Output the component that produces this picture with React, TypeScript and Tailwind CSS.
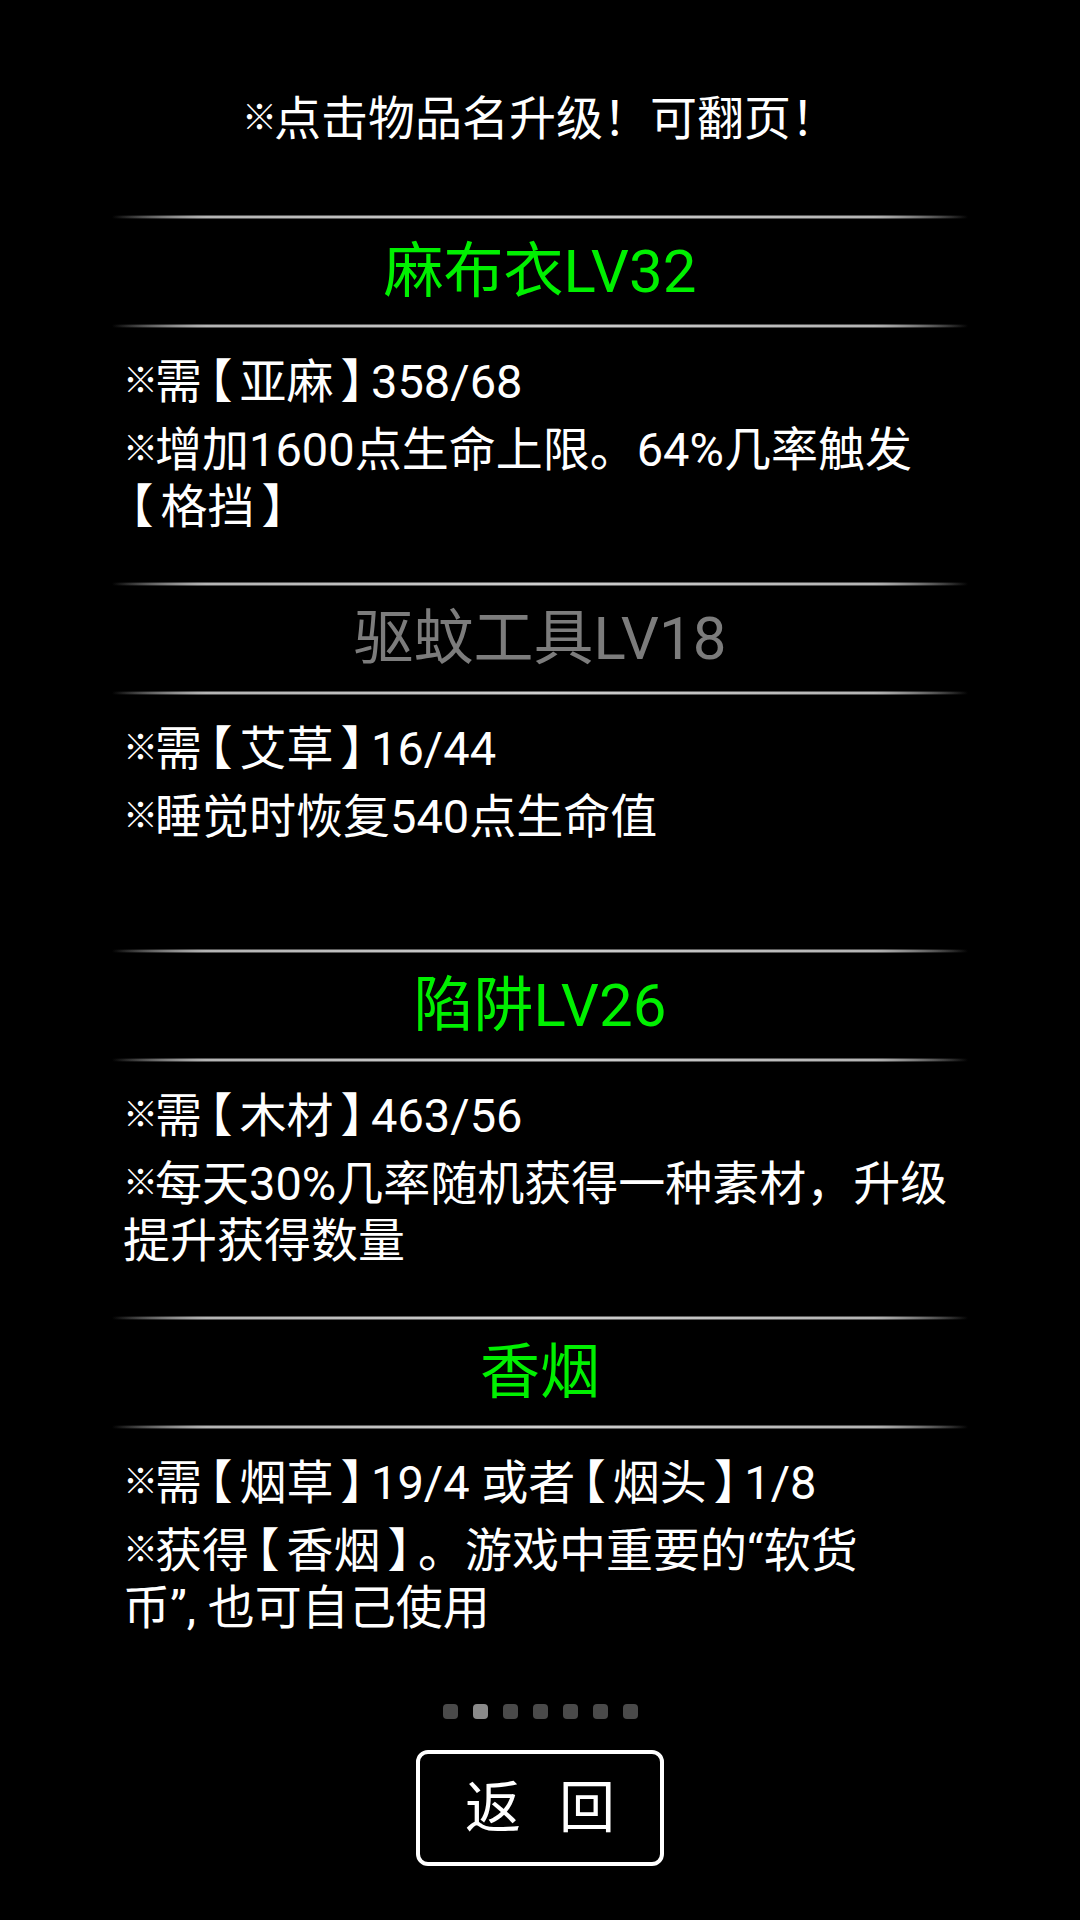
import React from "react";

type Item = {
  title: string;
  active: boolean;
  lines: string[][];
};

const items: Item[] = [
  {
    title: "麻布衣LV32",
    active: true,
    lines: [["※需【亚麻】358/68"], ["※增加1600点生命上限。64%几率触发", "【格挡】"]],
  },
  {
    title: "驱蚊工具LV18",
    active: false,
    lines: [["※需【艾草】16/44"], ["※睡觉时恢复540点生命值"]],
  },
  {
    title: "陷阱LV26",
    active: true,
    lines: [["※需【木材】463/56"], ["※每天30%几率随机获得一种素材，升级", "提升获得数量"]],
  },
  {
    title: "香烟",
    active: true,
    lines: [
      ["※需【烟草】19/4 或者【烟头】1/8"],
      ["※获得【香烟】。游戏中重要的“软货", "币”, 也可自己使用"],
    ],
  },
];

// ※ is a small half-width mark, brackets are narrower than full width
function Rich({ text }: { text: string }) {
  const parts = text.split(/([【】※])/);
  return (
    <>
      {parts.map((p, i) => {
        if (p === "※")
          return (
            <span key={i} className="text-[35px] leading-none align-[5px] mr-[-3px]">
              ※
            </span>
          );
        if (p === "【" || p === "】")
          return (
            <span key={i} className="px-[7px] [font-feature-settings:'halt']">
              {p}
            </span>
          );
        return <React.Fragment key={i}>{p}</React.Fragment>;
      })}
    </>
  );
}

function Divider() {
  return (
    <div className="mx-auto w-[856px] h-[4px] bg-[linear-gradient(to_right,transparent,#555_10%,#666_50%,#555_90%,transparent)]">
      <div className="mt-[1px] h-[2px] bg-[linear-gradient(to_right,transparent,#b4b4b4_11%,#cfcfcf_50%,#b4b4b4_89%,transparent)]" />
    </div>
  );
}

function Section({ item }: { item: Item }) {
  return (
    <div className="h-[367px] flex flex-col">
      <Divider />
      <div
        className={
          "h-[105px] flex items-center justify-center text-[60px] " +
          (item.active ? "text-[#00f000]" : "text-[#7c7c7c]")
        }
      >
        {item.title}
      </div>
      <Divider />
      <div className="pl-[123px] pt-[25px] flex flex-col gap-[11px] text-[47px] leading-[57px] text-white">
        {item.lines.map((para, i) => (
          <p key={i} className="whitespace-nowrap">
            {para.map((ln, j) => (
              <span key={j} className="block">
                <Rich text={ln} />
              </span>
            ))}
          </p>
        ))}
      </div>
    </div>
  );
}

export default function App() {
  return (
    <div className="w-[1080px] min-h-[1920px] bg-black text-white font-[Roboto,'Noto_Sans_CJK_SC',sans-serif]">
      <div className="pt-[90px] h-[215px] text-center text-[47px] leading-[57px]">
        <Rich text="※点击物品名升级！可翻页！" />
      </div>
      {items.map((it, i) => (
        <Section key={i} item={it} />
      ))}
      <div className="mt-[21px] flex justify-center gap-[15px]">
        {[0, 1, 2, 3, 4, 5, 6].map((d) => (
          <div
            key={d}
            className={"w-[15px] h-[15px] rounded-[4px] " + (d === 1 ? "bg-[#8a8a8a]" : "bg-[#4a4a4a]")}
          />
        ))}
      </div>
      <div className="mt-[31px] flex justify-center">
        <div className="w-[248px] h-[116px] border-[4px] border-white rounded-[12px] flex items-center justify-center gap-[38px] text-[56px] text-white">
          <span>返</span>
          <span>回</span>
        </div>
      </div>
    </div>
  );
}
